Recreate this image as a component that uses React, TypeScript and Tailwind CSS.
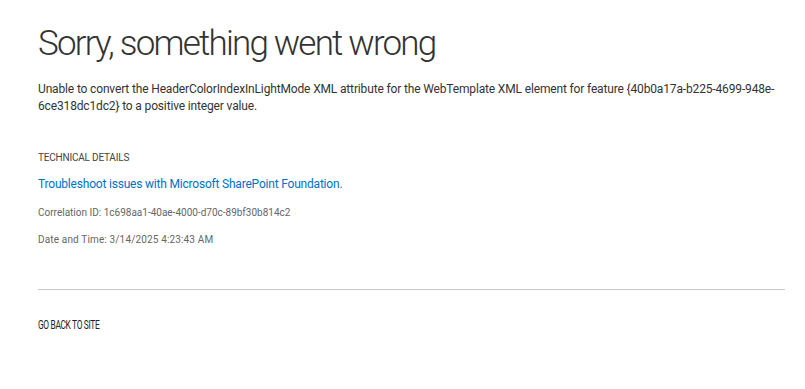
export default function App() {
  return (
    <div className="min-h-[389px] bg-white pl-[38px] pr-[20px] pt-[20px] font-['Roboto',sans-serif] text-[#333333]">
      <h1 className="text-[35px] font-light leading-[48px] tracking-[-1.8px]">Sorry, something went wrong</h1>
      <p className="mt-[13px] w-[747px] text-[12px] leading-[17px] tracking-[-0.15px] text-[#333333]">
        Unable to convert the HeaderColorIndexInLightMode XML attribute for the WebTemplate XML element for feature
        {" {40b0a17a-b225-4699-948e-6ce318dc1dc2}"} to a positive integer value.
      </p>
      <div className="mt-[36px] text-[10px] uppercase leading-[14px] tracking-[-0.2px] text-[#444444]">
        Technical Details
      </div>
      <a className="mt-[11px] block text-[12px] leading-[17px] tracking-[-0.2px] text-[#0072c6]" href="#">
        Troubleshoot issues with Microsoft SharePoint Foundation.
      </a>
      <div className="mt-[12px] text-[10px] leading-[16px] text-[#666666]">
        Correlation ID: 1c698aa1-40ae-4000-d70c-89bf30b814c2
      </div>
      <div className="mt-[11px] text-[10px] leading-[16px] tracking-[0.15px] text-[#666666]">
        Date and Time: 3/14/2025 4:23:43 AM
      </div>
      <hr className="mt-[41px] w-[747px] border-t border-[#c8c8c8]" />
      <div className="mt-[27px] flex">
        <a
          className="origin-left scale-x-[0.7] text-[12px] uppercase leading-[17px] tracking-[-0.5px] text-[#222222]"
          href="#"
        >
          Go back to site
        </a>
      </div>
    </div>
  );
}
